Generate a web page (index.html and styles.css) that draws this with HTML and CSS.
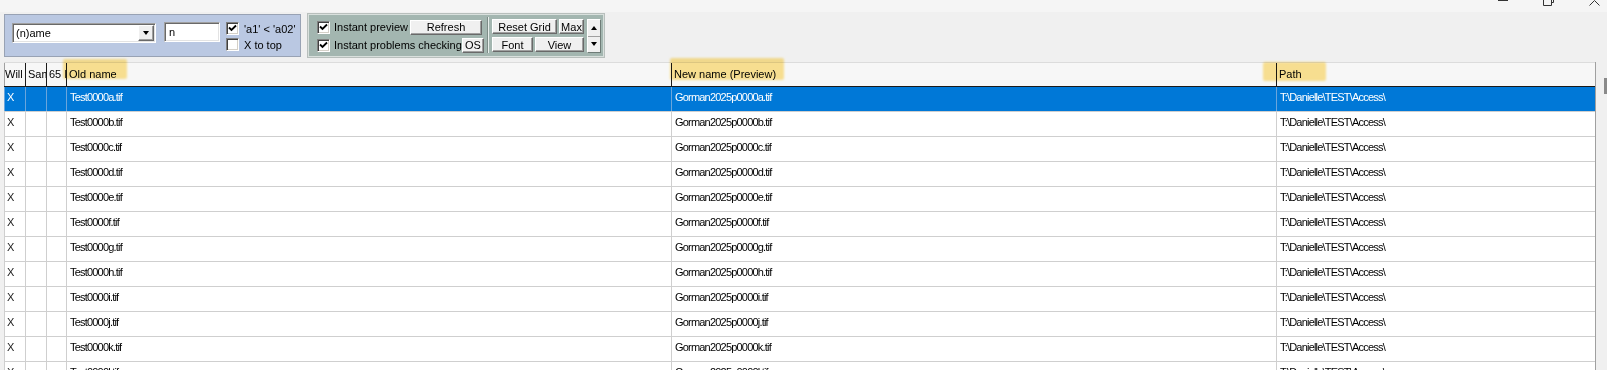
FILE: index.html
```html
<!DOCTYPE html>
<html lang="en">
<head>
<meta charset="UTF-8">
<title>Rename preview</title>
<link rel="stylesheet" href="styles.css">
</head>
<body>
<div class="titlebar">
    <svg class="wc wc-min" width="10" height="2"><path d="M0 0.5H10" stroke="#333" stroke-width="1"/></svg>
    <svg class="wc wc-max" width="11" height="6"><path d="M0.5 0V5.5H8.5V0M8.5 2.5H10.5V0" stroke="#333" stroke-width="1" fill="none"/></svg>
    <svg class="wc wc-close" width="11" height="6"><path d="M0.5 5.5L5.5 0.5L10.5 5.5" stroke="#333" stroke-width="1" fill="none"/></svg>
</div>

<div class="toolbar">
    <div class="panel panel-filter">
        <div class="combo">
            <span class="combo-text">(n)ame</span>
            <span class="combo-btn"><i class="tri tri-down"></i></span>
        </div>
        <div class="edit">n</div>
        <div class="opts">
            <label class="chk"><span class="box"><svg width="9" height="9" viewBox="0 0 9 9"><path d="M1 3.5L3.5 6L8 1.5" stroke="#000" stroke-width="1.8" fill="none"/></svg></span>'a1' &lt; 'a02'</label>
            <label class="chk"><span class="box"></span>X to top</label>
        </div>
    </div>

    <div class="panel panel-preview">
        <div class="checks">
            <div class="crow">
                <span class="box"><svg width="9" height="9" viewBox="0 0 9 9"><path d="M1 3.5L3.5 6L8 1.5" stroke="#000" stroke-width="1.8" fill="none"/></svg></span>
                <span class="lbl">Instant preview</span>
                <button class="btn btn-refresh">Refresh</button>
            </div>
            <div class="crow">
                <span class="box"><svg width="9" height="9" viewBox="0 0 9 9"><path d="M1 3.5L3.5 6L8 1.5" stroke="#000" stroke-width="1.8" fill="none"/></svg></span>
                <span class="lbl">Instant problems checking</span>
                <button class="btn btn-os">OS</button>
            </div>
        </div>
        <div class="sep"></div>
        <div class="btns">
            <div class="brow">
                <button class="btn w-reset">Reset Grid</button>
                <button class="btn w-max">Max</button>
            </div>
            <div class="brow">
                <button class="btn w-font">Font</button>
                <button class="btn w-view">View</button>
            </div>
        </div>
        <div class="updown">
            <span class="ud"><i class="tri tri-up"></i></span>
            <span class="ud"><i class="tri tri-down"></i></span>
        </div>
    </div>
</div>

<div class="grid-wrap">
    <div class="grid">
        <div class="row head">
            <div class="cell">Will</div>
            <div class="cell">Same</div>
            <div class="cell">65 Info</div>
            <div class="cell">Old name</div>
            <div class="cell">New name (Preview)</div>
            <div class="cell">Path</div>
        </div>
        <div class="row selected">
            <div class="cell x">X</div><div class="cell"></div><div class="cell"></div>
            <div class="cell">Test0000a.tif</div><div class="cell">Gorman2025p0000a.tif</div><div class="cell">T:\Danielle\TEST\Access\</div>
        </div>
        <div class="row">
            <div class="cell x">X</div><div class="cell"></div><div class="cell"></div>
            <div class="cell">Test0000b.tif</div><div class="cell">Gorman2025p0000b.tif</div><div class="cell">T:\Danielle\TEST\Access\</div>
        </div>
        <div class="row">
            <div class="cell x">X</div><div class="cell"></div><div class="cell"></div>
            <div class="cell">Test0000c.tif</div><div class="cell">Gorman2025p0000c.tif</div><div class="cell">T:\Danielle\TEST\Access\</div>
        </div>
        <div class="row">
            <div class="cell x">X</div><div class="cell"></div><div class="cell"></div>
            <div class="cell">Test0000d.tif</div><div class="cell">Gorman2025p0000d.tif</div><div class="cell">T:\Danielle\TEST\Access\</div>
        </div>
        <div class="row">
            <div class="cell x">X</div><div class="cell"></div><div class="cell"></div>
            <div class="cell">Test0000e.tif</div><div class="cell">Gorman2025p0000e.tif</div><div class="cell">T:\Danielle\TEST\Access\</div>
        </div>
        <div class="row">
            <div class="cell x">X</div><div class="cell"></div><div class="cell"></div>
            <div class="cell">Test0000f.tif</div><div class="cell">Gorman2025p0000f.tif</div><div class="cell">T:\Danielle\TEST\Access\</div>
        </div>
        <div class="row">
            <div class="cell x">X</div><div class="cell"></div><div class="cell"></div>
            <div class="cell">Test0000g.tif</div><div class="cell">Gorman2025p0000g.tif</div><div class="cell">T:\Danielle\TEST\Access\</div>
        </div>
        <div class="row">
            <div class="cell x">X</div><div class="cell"></div><div class="cell"></div>
            <div class="cell">Test0000h.tif</div><div class="cell">Gorman2025p0000h.tif</div><div class="cell">T:\Danielle\TEST\Access\</div>
        </div>
        <div class="row">
            <div class="cell x">X</div><div class="cell"></div><div class="cell"></div>
            <div class="cell">Test0000i.tif</div><div class="cell">Gorman2025p0000i.tif</div><div class="cell">T:\Danielle\TEST\Access\</div>
        </div>
        <div class="row">
            <div class="cell x">X</div><div class="cell"></div><div class="cell"></div>
            <div class="cell">Test0000j.tif</div><div class="cell">Gorman2025p0000j.tif</div><div class="cell">T:\Danielle\TEST\Access\</div>
        </div>
        <div class="row">
            <div class="cell x">X</div><div class="cell"></div><div class="cell"></div>
            <div class="cell">Test0000k.tif</div><div class="cell">Gorman2025p0000k.tif</div><div class="cell">T:\Danielle\TEST\Access\</div>
        </div>
        <div class="row">
            <div class="cell x">X</div><div class="cell"></div><div class="cell"></div>
            <div class="cell">Test0000l.tif</div><div class="cell">Gorman2025p0000l.tif</div><div class="cell">T:\Danielle\TEST\Access\</div>
        </div>
    </div>
    <div class="vscroll"><span class="thumb"></span></div>

    <!-- highlighter marks over the header -->
    <span class="hl hl-old"></span>
    <span class="hl hl-new"></span>
    <span class="hl hl-path"></span>
</div>
</body>
</html>
```

FILE: styles.css
```css
* { box-sizing: border-box; }
html, body { margin: 0; }
body {
    width: 1607px;
    height: 370px;
    overflow: hidden;
    background: #f0f0f0;
    font-family: "Liberation Sans", Arial, sans-serif;
    font-size: 11px;
    color: #000;
}

/* window title strip, only the bottom of the caption buttons shows */
.titlebar {
    height: 12px;
    background: #f5f5f5;
    display: flex;
    justify-content: flex-end;
    align-items: flex-start;
    padding-right: 7px;
}
.wc { display: block; }
.wc-max { margin-left: 35px; }
.wc-close { margin-left: 35px; }

.toolbar {
    display: flex;
    gap: 7px;
    height: 45px;
    padding: 2px 0 0 4px;
}
.panel {
    height: 43px;
    display: flex;
    align-items: flex-start;
}
.panel-filter {
    width: 297px;
    background: #bac8e2;
    border: 1px solid #98a2b4;
    padding: 7px 0 0 7px;
}
.panel-preview {
    width: 296px;
    background: #a3b6b0;
    border: 1px solid #d9e0dd;
    box-shadow: 0 0 0 1px #b8bfbc;
    padding: 4px 0 0 8px;
}

/* sunken 3d boxes */
.combo, .edit {
    height: 20px;
    background: #fff;
    border: 1px solid;
    border-color: #a0a0a0 #fff #fff #a0a0a0;
    box-shadow: inset 1px 1px #696969, inset -1px -1px #e3e3e3;
}
.combo {
    width: 144px;
    margin-top: 1px;
    display: flex;
    align-items: center;
    padding: 0 1px 0 3px;
}
.combo-text { flex: 1; }
.combo-btn {
    width: 16px;
    height: 16px;
    background: #f0f0f0;
    border: 1px solid;
    border-color: #fff #696969 #696969 #fff;
    box-shadow: inset -1px -1px #a0a0a0;
    display: flex;
    align-items: center;
    justify-content: center;
}
.edit {
    width: 56px;
    margin-left: 8px;
    padding: 3px 0 0 4px;
}

.tri {
    display: block;
    width: 0;
    height: 0;
    border-left: 3.5px solid transparent;
    border-right: 3.5px solid transparent;
}
.tri-down { border-top: 4px solid #000; }
.tri-up { border-bottom: 4px solid #000; }

.opts {
    margin-left: 6px;
    display: flex;
    flex-direction: column;
    gap: 3px;
}
.chk {
    display: flex;
    align-items: center;
    gap: 5px;
    height: 13px;
}
.box {
    width: 13px;
    height: 13px;
    flex: none;
    background: #fff;
    border: 1px solid;
    border-color: #808080 #fff #fff #808080;
    box-shadow: inset 1px 1px #404040, inset -1px -1px #d4d0c8;
    padding: 1px 0 0 1px;
}
.box svg { display: block; }

.checks {
    width: 167px;
    display: flex;
    flex-direction: column;
    gap: 2px;
}
.crow {
    height: 16px;
    display: flex;
    align-items: center;
}
.lbl { margin-left: 4px; }

.btn {
    height: 15px;
    padding: 0;
    margin: 0;
    font: inherit;
    color: #000;
    background: #f0f0f0;
    border: 1px solid;
    border-color: #fff #696969 #696969 #fff;
    box-shadow: inset -1px -1px #a0a0a0;
    line-height: 12px;
}
.btn-refresh { width: 72px; margin-left: auto; margin-right: 2px; }
.btn-os { width: 22px; margin-left: auto; }

.sep {
    width: 2px;
    height: 36px;
    margin: -2px 3px 0 3px;
    border-left: 1px solid #7d8c87;
    border-right: 1px solid #e8eeec;
}
.btns {
    display: flex;
    flex-direction: column;
    gap: 3px;
}
.brow { display: flex; gap: 2px; }
.w-reset { width: 65px; }
.w-max { width: 25px; }
.w-font { width: 41px; }
.w-view { width: 49px; }

.updown {
    width: 14px;
    height: 34px;
    margin-left: 3px;
    display: flex;
    flex-direction: column;
    border: 1px solid #fff;
    border-right-color: #6e7c77;
    border-bottom-color: #6e7c77;
}
.ud {
    flex: 1;
    background: #f0f0f0;
    display: flex;
    align-items: center;
    justify-content: center;
}
.ud + .ud { border-top: 1px solid #a0a0a0; }

/* grid */
.grid-wrap {
    position: relative;
    margin-top: 5px;
    padding-left: 4px;
    display: flex;
    align-items: flex-start;
}
.grid {
    width: 1592px;
    background: #fff;
    border-right: 1px solid #a0a0a0;
}
.row {
    display: grid;
    grid-template-columns: 21px 21px 20px 605px 605px 319px;
    height: 25px;
    border-bottom: 1px solid #cfcfcf;
    letter-spacing: -0.8px;
}
.cell {
    border-left: 1px solid #cfcfcf;
    padding: 0 0 4px 3px;
    display: flex;
    align-items: center;
    white-space: nowrap;
    overflow: hidden;
}
.cell.x { padding-left: 2px; letter-spacing: 0; color: #222; }
.selected .cell.x { color: #fff; }
.head {
    height: 25px;
    background: #f7f7f7;
    border-top: 1px solid #dcdcdc;
    border-bottom: 1px solid #1a1a1a;
    letter-spacing: 0;
}
.head .cell { border-left-color: #1a1a1a; padding: 0 0 1px 2px; }
.head .cell:first-child { border-left-color: #a0a0a0; padding-left: 0; }
.selected { background: #0078d7; color: #fff; }
.selected .cell { border-left-color: #6aa5dc; }

.vscroll { width: 11px; height: 100px; }
.thumb {
    display: block;
    width: 3px;
    height: 16px;
    margin: 16px 0 0 8px;
    background: #8a8a8a;
}

.hl {
    position: absolute;
    background: #ffe07a;
    opacity: 0.8;
    mix-blend-mode: multiply;
    border-radius: 2px;
    filter: blur(1px);
}
.hl-old { left: 63px; top: -3px; width: 64px; height: 20px; }
.hl-new { left: 670px; top: -4px; width: 114px; height: 22px; }
.hl-path { left: 1263px; top: 0; width: 63px; height: 19px; }
```
